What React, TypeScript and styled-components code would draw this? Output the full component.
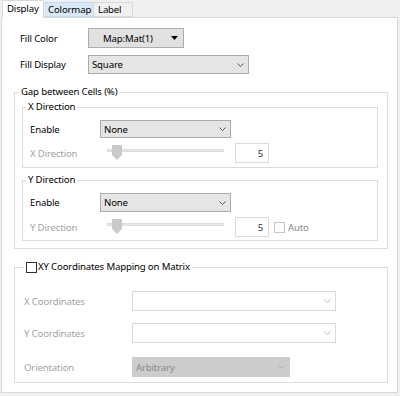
import React from 'react';
import styled, { createGlobalStyle } from 'styled-components';

const Global = createGlobalStyle`
  html, body { margin: 0; padding: 0; background: #f0f0f0; }
  body {
    width: 400px; height: 396px; overflow: hidden;
    font-family: "Noto Sans", "Open Sans", sans-serif;
    font-size: 9.6px; letter-spacing: -0.15px; color: #000;
  }
  * { box-sizing: border-box; }
`;

const Window = styled.div`
  width: 400px;
  height: 396px;
  display: flex;
  flex-direction: column;
`;

const TabBar = styled.div`
  display: flex;
  align-items: flex-start;
  height: 17px;
  padding-left: 2px;
`;

const Tab = styled.div<{ $active?: boolean; $hover?: boolean; $w: number }>`
  position: relative;
  z-index: ${p => (p.$active ? 1 : 0)};
  width: ${p => p.$w}px;
  height: ${p => (p.$active ? '18px' : '15px')};
  margin-top: ${p => (p.$active ? '0' : '2px')};
  padding: ${p => (p.$active ? '2px 0 0 4px' : '1px 0 0 4px')};
  background: ${p => (p.$active ? '#fff' : p.$hover ? '#d8e8f7' : '#f0f0f0')};
  border: 1px solid ${p => (p.$hover ? '#c3dbf1' : '#d9d9d9')};
  border-bottom: ${p => (p.$active ? 'none' : undefined)};
  margin-left: ${p => (p.$active ? '0' : '-1px')};
  line-height: 12px;
  white-space: nowrap;
`;

const Panel = styled.div`
  height: 376px;
  margin: 0 2px 0 1px;
  border: 1px solid #d9d9d9;
  background: #fff;
  padding: 10px 9px 0 12px;
`;

const Row = styled.div<{ $gap?: number; $indent?: number; $h?: number }>`
  display: flex;
  align-items: center;
  height: ${p => p.$h ?? 20}px;
  margin-top: ${p => p.$gap ?? 0}px;
  padding-left: ${p => p.$indent ?? 0}px;
`;

const Label = styled.span<{ $w: number; $disabled?: boolean }>`
  width: ${p => p.$w}px;
  flex: none;
  color: ${p => (p.$disabled ? '#a3a3a3' : '#000')};
  white-space: nowrap;
`;

const MenuButton = styled.div`
  width: 96px;
  height: 20px;
  display: flex;
  align-items: center;
  padding: 0 5px 0 14px;
  background: #e1e1e1;
  border: 1px solid #adadad;
  color: #000;
`;

const MenuText = styled.span`
  flex: 1;
`;

const Select = styled.div<{ $w: number; $h?: number; $variant?: 'enabled' | 'empty' | 'grey' }>`
  width: ${p => p.$w}px;
  height: ${p => p.$h ?? 19}px;
  display: flex;
  align-items: center;
  justify-content: space-between;
  padding: 0 4px 0 3px;
  background: ${p => (p.$variant === 'empty' ? '#fff' : p.$variant === 'grey' ? '#cccccc' : '#e5e5e5')};
  border: 1px solid ${p => (p.$variant === 'empty' ? '#d9d9d9' : p.$variant === 'grey' ? '#cccccc' : '#acacac')};
  color: ${p => (p.$variant === 'grey' ? '#8a8a8a' : '#000')};
  white-space: nowrap;
`;

const Group = styled.fieldset<{ $mt?: number }>`
  margin: ${p => p.$mt ?? 0}px 0 0 0;
  padding: 0;
  border: 1px solid #dcdcdc;
  min-width: 0;
`;

const GroupBody = styled.div<{ $pad: string }>`
  padding: ${p => p.$pad};
`;

const Legend = styled.legend<{ $ml: number }>`
  margin-left: ${p => p.$ml}px;
  padding: 0 2px;
  line-height: 14px;
  height: 14px;
  display: flex;
  align-items: center;
  gap: 1px;
  white-space: nowrap;
`;

const Slider = styled.div`
  position: relative;
  width: 117px;
  height: 20px;
  margin-left: 7px;
  flex: none;
`;

const Track = styled.div`
  margin-top: 6px;
  height: 3px;
  background: #e7e7e7;
  border: 1px solid #dcdcdc;
`;

const Thumb = styled.svg`
  position: absolute;
  left: 5px;
  top: 2px;
`;

const NumBox = styled.div`
  width: 34px;
  height: 20px;
  margin-left: 11px;
  border: 1px solid #dadada;
  display: flex;
  align-items: center;
  justify-content: flex-end;
  padding-right: 5px;
  color: #333;
  flex: none;
`;

const Check = styled.span<{ $disabled?: boolean }>`
  width: 11px;
  height: 11px;
  flex: none;
  background: #fff;
  border: 1px solid ${p => (p.$disabled ? '#c4c4c4' : '#333')};
`;

const CheckWrap = styled.div`
  display: flex;
  align-items: center;
  gap: 3px;
  margin-left: 5px;
  color: #8a8a8a;
`;

const Chevron = ({ color }: { color: string }) => (
  <svg width="7" height="4" viewBox="0 0 7 4">
    <path d="M0.5 0.5 L3.5 3.5 L6.5 0.5" fill="none" stroke={color} strokeWidth="1" />
  </svg>
);

const SliderRow = ({ label, auto }: { label: string; auto?: boolean }) => (
  <Row $gap={5} $h={20}>
    <Label $w={70} $disabled>{label}</Label>
    <Slider>
      <Track />
      <Thumb width="10" height="15" viewBox="0 0 10 15">
        <path d="M0 0 H10 V10 L5 15 L0 10 Z" fill="#c9c9c9" />
      </Thumb>
    </Slider>
    <NumBox>5</NumBox>
    {auto && (
      <CheckWrap>
        <Check $disabled />
        <span>Auto</span>
      </CheckWrap>
    )}
  </Row>
);

export default function App() {
  return (
    <Window>
      <Global />
      <TabBar>
        <Tab $active $w={42}>Display</Tab>
        <Tab $hover $w={51}>Colormap</Tab>
        <Tab $w={40}>Label</Tab>
      </TabBar>
      <Panel>
        <Row $indent={6}>
          <Label $w={68}>Fill Color</Label>
          <MenuButton>
            <MenuText>Map:Mat(1)</MenuText>
            <svg width="7" height="4" viewBox="0 0 7 4">
              <path d="M0 0 H7 L3.5 4 Z" fill="#000" />
            </svg>
          </MenuButton>
        </Row>
        <Row $indent={6} $gap={7} $h={19}>
          <Label $w={68}>Fill Display</Label>
          <Select $w={161} $h={19}>
            <span>Square</span>
            <Chevron color="#555" />
          </Select>
        </Row>

        <Group $mt={11}>
          <Legend $ml={4}>Gap between Cells (%)</Legend>
          <GroupBody $pad="1px 9px 7px 7px">
            <Group>
              <Legend $ml={3}>X Direction</Legend>
              <GroupBody $pad="6px 0 4px 7px">
                <Row $h={18}>
                  <Label $w={70}>Enable</Label>
                  <Select $w={131} $h={18}>
                    <span>None</span>
                    <Chevron color="#555" />
                  </Select>
                </Row>
                <SliderRow label="X Direction" />
              </GroupBody>
            </Group>
            <Group $mt={5}>
              <Legend $ml={3}>Y Direction</Legend>
              <GroupBody $pad="6px 0 3px 7px">
                <Row $h={19}>
                  <Label $w={70}>Enable</Label>
                  <Select $w={131} $h={19}>
                    <span>None</span>
                    <Chevron color="#555" />
                  </Select>
                </Row>
                <SliderRow label="Y Direction" auto />
              </GroupBody>
            </Group>
          </GroupBody>
        </Group>

        <Group $mt={11}>
          <Legend $ml={9}>
            <Check />
            <span>XY Coordinates Mapping on Matrix</span>
          </Legend>
          <GroupBody $pad="17px 0 5px 9px">
            <Row $h={20}>
              <Label $w={108} $disabled>X Coordinates</Label>
              <Select $w={204} $h={20} $variant="empty">
                <span />
                <Chevron color="#b5b5b5" />
              </Select>
            </Row>
            <Row $h={20} $gap={12}>
              <Label $w={108} $disabled>Y Coordinates</Label>
              <Select $w={204} $h={20} $variant="empty">
                <span />
                <Chevron color="#b5b5b5" />
              </Select>
            </Row>
            <Row $h={20} $gap={14}>
              <Label $w={108} $disabled>Orientation</Label>
              <Select $w={158} $h={20} $variant="grey">
                <span>Arbitrary</span>
                <Chevron color="#adadad" />
              </Select>
            </Row>
          </GroupBody>
        </Group>
      </Panel>
    </Window>
  );
}
